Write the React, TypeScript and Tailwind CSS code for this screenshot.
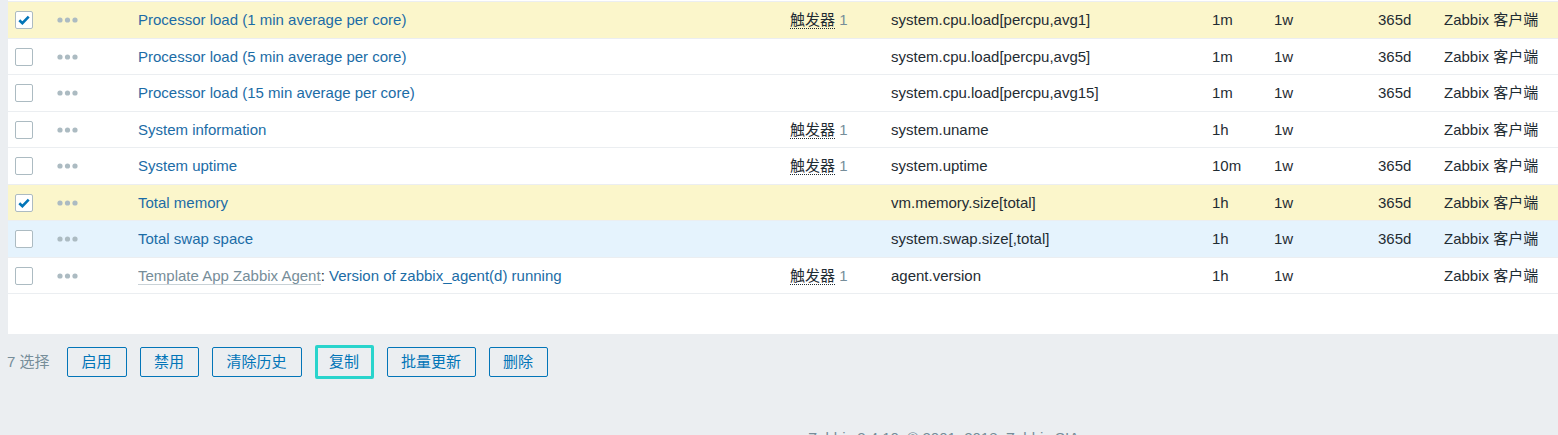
import { FC } from "react";

type Item = {
  name: string;
  prefix?: string;
  trigger?: boolean;
  key: string;
  interval: string;
  history: string;
  trends: string;
  checked?: boolean;
  hover?: boolean;
};

const items: Item[] = [
  { name: "Processor load (1 min average per core)", trigger: true, key: "system.cpu.load[percpu,avg1]", interval: "1m", history: "1w", trends: "365d", checked: true },
  { name: "Processor load (5 min average per core)", key: "system.cpu.load[percpu,avg5]", interval: "1m", history: "1w", trends: "365d" },
  { name: "Processor load (15 min average per core)", key: "system.cpu.load[percpu,avg15]", interval: "1m", history: "1w", trends: "365d" },
  { name: "System information", trigger: true, key: "system.uname", interval: "1h", history: "1w", trends: "" },
  { name: "System uptime", trigger: true, key: "system.uptime", interval: "10m", history: "1w", trends: "365d" },
  { name: "Total memory", key: "vm.memory.size[total]", interval: "1h", history: "1w", trends: "365d", checked: true },
  { name: "Total swap space", key: "system.swap.size[,total]", interval: "1h", history: "1w", trends: "365d", hover: true },
  { name: "Version of zabbix_agent(d) running", prefix: "Template App Zabbix Agent", trigger: true, key: "agent.version", interval: "1h", history: "1w", trends: "" },
];

const Checkbox: FC<{ checked?: boolean }> = ({ checked }) => (
  <span className="flex h-[18px] w-[18px] items-center justify-center rounded-[2px] border border-[#acbbc2] bg-white">
    {checked && (
      <svg width="12" height="10" viewBox="0 0 12 10">
        <path d="M1.3 5.2 L4.4 8.2 L10.7 1.6" fill="none" stroke="#0275b8" strokeWidth="2.6" />
      </svg>
    )}
  </span>
);

const Dots = () => (
  <svg width="21" height="6" viewBox="0 0 21 6">
    <circle cx="3" cy="3" r="2.6" fill="#acbbc2" />
    <circle cx="10.5" cy="3" r="2.6" fill="#acbbc2" />
    <circle cx="18" cy="3" r="2.6" fill="#acbbc2" />
  </svg>
);

const Row: FC<{ item: Item }> = ({ item }) => {
  const bg = item.checked ? "bg-[#fbf6cb]" : item.hover ? "bg-[#e5f3fd]" : "bg-white";
  return (
    <div className={`flex h-[36.5px] items-center border-b border-[#ebeef1] pt-[1px] ${bg}`}>
      <div className="w-[49px] pl-[7px]">
        <Checkbox checked={item.checked} />
      </div>
      <div className="flex w-[81px] items-center">
        <Dots />
      </div>
      <div className="w-[652px] truncate">
        {item.prefix && (
          <>
            <span className="border-b border-[#c9d2d7] text-[#768d99]">{item.prefix}</span>
            <span className="text-[#1f2c33]">: </span>
          </>
        )}
        <span className="text-[#1b6ca6]">{item.name}</span>
      </div>
      <div className="w-[101px]">
        {item.trigger && (
          <>
            <span className="border-b border-dotted border-[#1f2c33] text-[#1f2c33]">触发器</span>
            <span className="text-[#768d99]"> 1</span>
          </>
        )}
      </div>
      <div className="w-[321px] text-[#1f2c33]">{item.key}</div>
      <div className="w-[62px] text-[#1f2c33]">{item.interval}</div>
      <div className="w-[104px] text-[#1f2c33]">{item.history}</div>
      <div className="w-[66px] text-[#1f2c33]">{item.trends}</div>
      <div className="flex-1 whitespace-nowrap text-[#1f2c33]">Zabbix 客户端</div>
    </div>
  );
};

const Btn: FC<{ label: string; focus?: boolean; w: string }> = ({ label, focus, w }) => (
  <button
    className={`flex items-center justify-center rounded-[2px] text-[15px] text-[#0275b8] ${w} ${
      focus ? "h-[34px] border-[3px] border-[#29d4cc]" : "h-[30px] border border-[#0275b8]"
    }`}
  >
    {label}
  </button>
);

export default function App() {
  return (
    <div
      className="h-[435px] w-[1558px] overflow-hidden bg-[#ebeef1] text-[15px]"
      style={{ fontFamily: '"Liberation Sans", Arial, "Noto Sans CJK SC", sans-serif' }}
    >
      <div className="ml-[8px] bg-white pt-[1px]">
        <div className="border-t border-[#ebeef1]">
          {items.map((it) => (
            <Row key={it.name} item={it} />
          ))}
        </div>
        <div className="h-[40px]" />
      </div>
      <div className="flex items-center pl-[7px] pt-[11px]">
        <span className="mr-[17px] text-[#768d99]">7 选择</span>
        <div className="flex items-center gap-[13px]">
          <Btn label="启用" w="w-[60px]" />
          <Btn label="禁用" w="w-[59px]" />
          <Btn label="清除历史" w="w-[90px]" />
          <Btn label="复制" focus w="w-[59px]" />
          <Btn label="批量更新" w="w-[89px]" />
          <Btn label="删除" w="w-[59px]" />
        </div>
      </div>
      <div className="pl-[808px] pt-[50px] text-[15px] leading-[18px] text-[#768d99]">
        Zabbix 3.4.10. © 2001–2018, Zabbix SIA
      </div>
    </div>
  );
}
